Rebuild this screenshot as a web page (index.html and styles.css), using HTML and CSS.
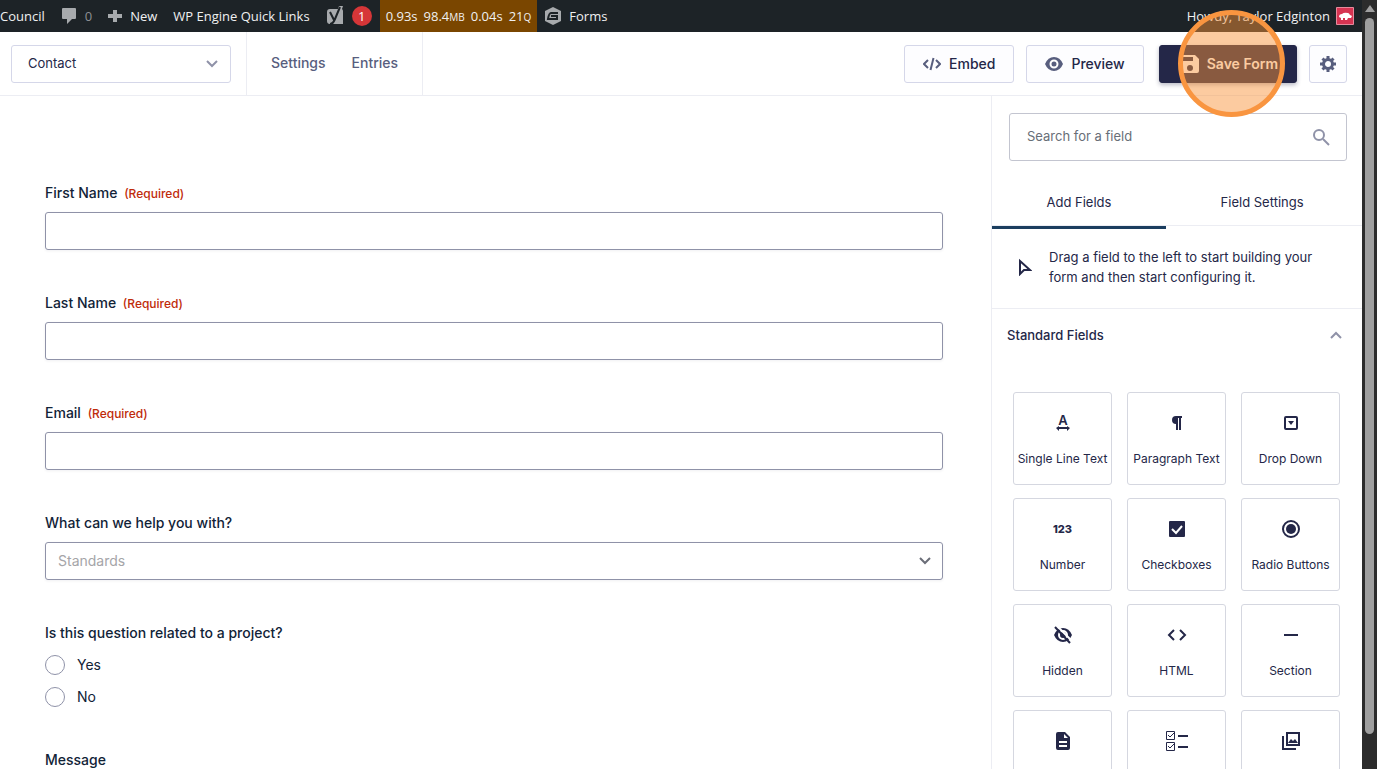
FILE: index.html
```
<!DOCTYPE html>
<html lang="en">
<head>
    <meta charset="UTF-8">
    <meta name="viewport" content="width=device-width, initial-scale=1.0">
    <title>Contact - Forms</title>
    <link rel="stylesheet" href="styles.css">
</head>
<body>
    <div class="window">
        <div class="page">
            <nav class="adminbar">
                <a href="#">Council</a>
                <a href="#" class="comments">
                    <svg width="16" height="18" viewBox="0 0 16 18"><path fill="#a7aaad" d="M2 1h12q1 0 1 1v9q0 1-1 1h-3l-5 5v-5H2q-1 0-1-1V2q0-1 1-1z"/></svg>
                    <span>0</span>
                </a>
                <a href="#">
                    <svg width="14" height="14" viewBox="0 0 14 14"><path fill="#a7aaad" d="M5 1h4v4h5v4H9v4H5V9H0V5h5z"/></svg>
                    <span>New</span>
                </a>
                <a href="#">WP Engine Quick Links</a>
                <a href="#" class="yoast" aria-label="SEO">
                    <svg width="18" height="20" viewBox="0 0 18 20">
                        <path fill="#a7aaad" d="M4 3h8l1-3h4l-1 3q1 1 1 2v13H4q-3 0-3-3V6q0-3 3-3z"/>
                        <path fill="none" stroke="#1d2327" stroke-width="2" d="M4 6l4 8M14 1L9 13q-2 5-5 5"/>
                    </svg>
                    <span class="badge">1</span>
                </a>
                <a href="#" class="stats">
                    <span>0.93s</span>
                    <span>98.4<small>MB</small></span>
                    <span>0.04s</span>
                    <span>21<small>Q</small></span>
                </a>
                <a href="#">
                    <svg width="16" height="18" viewBox="0 0 16 18">
                        <path fill="#a7aaad" d="M8 0l8 4v10l-8 4-8-4V4z"/>
                        <path fill="none" stroke="#1d2327" stroke-width="2" d="M13 6H6q-2 0-3 6h9V9H6"/>
                    </svg>
                    <span>Forms</span>
                </a>
                <a href="#" class="account">
                    <span>Howdy, Taylor Edginton</span>
                    <svg width="18" height="18" viewBox="0 0 18 18">
                        <path fill="#d63452" stroke="#e58a9c" d="M.5.5h17v17H.5z"/>
                        <path fill="#fff" d="M3 10q0-3 3-3 2-2 6-1 1 0 2 2l2 1-1 2h-3l-1 2h-2v-2H7v2H5v-2z"/>
                    </svg>
                </a>
            </nav>

            <header class="toolbar">
                <div class="switcher">
                    <select class="form-select" aria-label="Form">
                        <option>Contact</option>
                    </select>
                    <svg class="chevron" width="12" height="8" viewBox="0 0 12 8"><path fill="none" stroke="#8f92a8" stroke-width="2" d="M1 1l5 5 5-5"/></svg>
                </div>
                <nav class="links">
                    <a href="#">Settings</a>
                    <a href="#">Entries</a>
                </nav>
                <div class="actions">
                    <button class="btn">
                        <svg width="18" height="14" viewBox="0 0 18 14"><path fill="none" stroke="#585e7e" stroke-width="2" d="M5 3L1 7l4 4M13 3l4 4-4 4M10.500 1l-3 12"/></svg>
                        Embed
                    </button>
                    <button class="btn">
                        <svg width="18" height="14" viewBox="0 0 18 14">
                            <path fill="#585e7e" d="M9 0q6 0 9 7-3 7-9 7T0 7q3-7 9-7z"/>
                            <circle cx="9" cy="7" r="3.500" fill="#585e7e" stroke="#fff" stroke-width="2"/>
                        </svg>
                        Preview
                    </button>
                    <div class="save">
                        <button class="btn primary">
                            <svg width="18" height="18" viewBox="0 0 18 18"><path fill="#fff" fill-rule="evenodd" d="M2 0h12l4 4v12q0 2-2 2H2q-2 0-2-2V2q0-2 2-2zM2 2v4h10V2zM9 10a3 3 0 1 0 0 6 3 3 0 1 0 0-6z"/></svg>
                            Save Form
                        </button>
                        <span class="click-marker"></span>
                    </div>
                    <button class="btn gear" aria-label="Form settings">
                        <svg width="16" height="16" viewBox="0 0 16 16">
                            <circle cx="8" cy="8" r="4.500" fill="none" stroke="#585e7e" stroke-width="3"/>
                            <path stroke="#585e7e" stroke-width="3" d="M8 0v3M8 13v3M0 8h3M13 8h3M2.500 2.500l2 2M11.500 11.500l2 2M2.500 13.500l2-2M11.500 4.500l2-2"/>
                        </svg>
                    </button>
                </div>
            </header>

            <div class="editor">
                <main class="canvas">
                    <div class="field">
                        <label for="first">First Name <span class="required">(Required)</span></label>
                        <input type="text" id="first">
                    </div>
                    <div class="field">
                        <label for="last">Last Name <span class="required">(Required)</span></label>
                        <input type="text" id="last">
                    </div>
                    <div class="field">
                        <label for="email">Email <span class="required">(Required)</span></label>
                        <input type="email" id="email">
                    </div>
                    <div class="field">
                        <label for="topic">What can we help you with?</label>
                        <div class="select-wrap">
                            <select id="topic">
                                <option>Standards</option>
                            </select>
                            <svg class="chevron" width="12" height="8" viewBox="0 0 12 8"><path fill="none" stroke="#6b6e78" stroke-width="2" d="M1 1l5 5 5-5"/></svg>
                        </div>
                    </div>
                    <fieldset class="field">
                        <legend>Is this question related to a project?</legend>
                        <label class="choice"><input type="radio" name="project"> Yes</label>
                        <label class="choice"><input type="radio" name="project"> No</label>
                    </fieldset>
                    <div class="field">
                        <label for="message">Message</label>
                        <textarea id="message"></textarea>
                    </div>
                </main>

                <aside class="sidebar">
                    <div class="search">
                        <input type="search" placeholder="Search for a field" aria-label="Search for a field">
                        <svg class="search-icon" width="18" height="18" viewBox="0 0 18 18"><g fill="none" stroke="#8f92a8" stroke-width="2"><circle cx="7" cy="7" r="5"/><path d="M11 11l6 6"/></g></svg>
                    </div>
                    <div class="tabs">
                        <button class="tab active">Add Fields</button>
                        <button class="tab">Field Settings</button>
                    </div>
                    <div class="hint">
                        <svg width="14" height="18" viewBox="0 0 14 18"><path fill="none" stroke="#242748" stroke-width="2" d="M2 3v13l4-4h6z"/></svg>
                        <p>Drag a field to the left to start building your form and then start configuring it.</p>
                    </div>
                    <button class="group-title">
                        Standard Fields
                        <svg width="12" height="8" viewBox="0 0 12 8"><path fill="none" stroke="#8f92a8" stroke-width="2" d="M1 7l5-5 5 5"/></svg>
                    </button>
                    <div class="fields">
                        <button class="card">
                            <svg width="20" height="20" viewBox="0 0 20 20">
                                <text x="10" y="12" text-anchor="middle" class="icon-letter">A</text>
                                <path d="M3 15l3-2v1h8v-1l3 2-3 3v-2H6v2z"/>
                            </svg>
                            Single Line Text
                        </button>
                        <button class="card">
                            <svg width="20" height="20" viewBox="0 0 20 20"><path d="M9 3h6v2h-1v12h-2V5h-1v12H9v-6q-4 0-4-4t4-4z"/></svg>
                            Paragraph Text
                        </button>
                        <button class="card">
                            <svg width="20" height="20" viewBox="0 0 20 20"><rect class="line" x="4" y="4" width="12" height="12" rx="1"/><path d="M7 8h6l-3 4z"/></svg>
                            Drop Down
                        </button>
                        <button class="card">
                            <span class="digits">123</span>
                            Number
                        </button>
                        <button class="card">
                            <svg width="20" height="20" viewBox="0 0 20 20"><rect x="2" y="2" width="16" height="16" rx="1"/><path class="tick" d="M5 10l4 4 6-7"/></svg>
                            Checkboxes
                        </button>
                        <button class="card">
                            <svg width="20" height="20" viewBox="0 0 20 20"><circle class="line" cx="10" cy="10" r="8"/><circle cx="10" cy="10" r="5"/></svg>
                            Radio Buttons
                        </button>
                        <button class="card">
                            <svg width="20" height="20" viewBox="0 0 20 20">
                                <path d="M10 3q6 0 9 7-3 7-9 7T1 10q3-7 9-7z"/>
                                <circle class="tick" cx="10" cy="10" r="4"/>
                                <path class="cut" d="M4 1l15 15"/>
                                <path class="line" d="M2 2l15 16"/>
                            </svg>
                            Hidden
                        </button>
                        <button class="card">
                            <svg width="20" height="20" viewBox="0 0 20 20"><path class="line" d="M7 5l-5 5 5 5M13 5l5 5-5 5"/></svg>
                            HTML
                        </button>
                        <button class="card">
                            <svg width="20" height="20" viewBox="0 0 20 20"><path class="line" d="M3 10h14"/></svg>
                            Section
                        </button>
                        <button class="card">
                            <svg width="20" height="20" viewBox="0 0 20 20"><path fill-rule="evenodd" d="M5 1h7l5 5v11q0 2-2 2H5q-2 0-2-2V3q0-2 2-2zM11 3v4h4zM6 10v2h8v-2zM6 14v2h8v-2z"/></svg>
                            Page
                        </button>
                        <button class="card">
                            <svg width="22" height="20" viewBox="0 0 22 20">
                                <path class="thin" d="M.5.500h8v8h-8zM.5 11.500h8v8h-8zM2 4l2 2 4-4M2 15l2 2 4-4"/>
                                <path class="line" d="M12 5h10M12 16h10"/>
                            </svg>
                            Multiple Choice
                        </button>
                        <button class="card">
                            <svg width="20" height="20" viewBox="0 0 20 20"><path class="line" d="M6 2h12v12H6zM2 5v13h13"/><path d="M7 12l3-4 2 2 2-2 3 4z"/></svg>
                            Image Choice
                        </button>
                    </div>
                </aside>
            </div>
        </div>

        <div class="scrollbar">
            <span class="arrow"></span>
            <span class="thumb"></span>
        </div>
    </div>
</body>
</html>
```
FILE: styles.css
```
* {
    box-sizing: border-box;
}

body {
    margin: 0;
    font-family: Inter, sans-serif;
    font-size: 14px;
    line-height: 20px;
    color: #242748;
    background-color: #fff;
}

button, input, select, textarea {
    font: inherit;
    color: inherit;
}

a {
    color: inherit;
    text-decoration: none;
}

svg {
    flex: none;
}

.window {
    display: flex;
    height: 100vh;
    overflow: hidden;
}

.page {
    flex: 1;
    min-width: 0;
    display: flex;
    flex-direction: column;
}

/* admin bar */
.adminbar {
    flex: none;
    display: flex;
    height: 32px;
    background-color: #1d2327;
    color: #f0f0f1;
    font-family: "Open Sans", sans-serif;
    font-size: 13px;
    white-space: nowrap;
}

.adminbar a {
    display: flex;
    align-items: center;
    gap: 8px;
    padding: 0 8px;
}

.adminbar a:first-child {
    padding-left: 0;
}

.adminbar .comments {
    color: #8c8f94;
}

.badge {
    width: 20px;
    border-radius: 10px;
    background-color: #d63638;
    color: #fff;
    text-align: center;
}

.adminbar .stats {
    gap: 6px;
    padding: 0 6px;
    background-color: #7a4600;
}

.stats small {
    font-size: 10px;
}

.adminbar .account {
    gap: 6px;
    margin-left: auto;
}

/* toolbar */
.toolbar {
    flex: none;
    display: flex;
    height: 64px;
    border-bottom: 1px solid #ecedf3;
}

.switcher {
    position: relative;
    padding: 13px 15px 0 11px;
}

.form-select {
    appearance: none;
    width: 220px;
    height: 38px;
    padding: 0 16px 2px;
    border: 1px solid #d5d7e9;
    border-radius: 3px;
    background-color: #fff;
    font-size: 13px;
}

.switcher .chevron {
    position: absolute;
    right: 28px;
    top: 28px;
}

.links {
    display: flex;
    align-items: center;
    gap: 26px;
    padding: 0 24px 2px;
    border: solid #ecedf3;
    border-width: 0 1px;
    color: #585e7e;
    font-weight: 500;
}

.actions {
    display: flex;
    gap: 12px;
    margin-left: auto;
    padding: 13px 15px 0 0;
}

.btn {
    display: flex;
    align-items: center;
    justify-content: center;
    gap: 8px;
    height: 38px;
    padding: 0 18px;
    border: 1px solid #d5d7e9;
    border-radius: 3px;
    background-color: #fdfdff;
    font-weight: 500;
}

.save {
    position: relative;
    margin-left: 3px;
}

.primary {
    padding: 0 18px 0 21px;
    border-color: #242748;
    background-color: #242748;
    box-shadow: 0 2px 4px #24274850;
    color: #fff;
    font-weight: 600;
}

.click-marker {
    position: absolute;
    z-index: 1;
    left: 19px;
    top: -35px;
    width: 107px;
    height: 107px;
    border: 5px solid #f99540;
    border-radius: 50%;
    background-color: rgba(249, 147, 57, 0.48);
    pointer-events: none;
}

.gear {
    width: 38px;
    padding: 0;
}

/* form */
.editor {
    flex: 1;
    min-height: 0;
    display: flex;
}

.canvas {
    flex: 1;
    overflow: hidden;
    padding: 87px 48px 0 45px;
    color: #112337;
}

.field {
    margin: 0 0 43px;
    padding: 0;
    border: 0;
    font-weight: 500;
}

.field label {
    display: block;
    margin-bottom: 9px;
}

.required {
    margin-left: 3px;
    color: #c02b0a;
    font-size: 12px;
    line-height: 1;
}

.field input[type="text"],
.field input[type="email"],
.field select,
.field textarea {
    display: block;
    width: 100%;
    height: 38px;
    padding: 0 12px;
    border: 1px solid #8f92a8;
    border-radius: 3px;
    background-color: #fff;
    box-shadow: 0 1px 3px #24274812;
}

.field select {
    appearance: none;
    color: #a5a5a8;
    font-weight: 400;
}

.field textarea {
    height: 120px;
}

.select-wrap {
    position: relative;
}

.select-wrap .chevron {
    position: absolute;
    right: 12px;
    top: 15px;
}

.field legend {
    margin-bottom: 12px;
    padding: 0;
}

.field .choice {
    display: flex;
    align-items: center;
    gap: 12px;
    margin-bottom: 12px;
    font-weight: 400;
}

.field .choice:last-child {
    margin-bottom: 0;
}

.choice input {
    appearance: none;
    width: 20px;
    height: 20px;
    margin: 0;
    border: 1px solid #8f92a8;
    border-radius: 50%;
}

/* sidebar */
.sidebar {
    flex: none;
    width: 371px;
    overflow: hidden;
    border-left: 1px solid #ecedf3;
    font-size: 13px;
}

.search {
    position: relative;
    padding: 17px 15px 19px 17px;
}

.search input {
    appearance: none;
    display: block;
    width: 100%;
    height: 48px;
    padding: 0 50px 2px 17px;
    border: 1px solid #c3c5d0;
    border-radius: 3px;
}

.search input::placeholder {
    color: #686e77;
}

.search-icon {
    position: absolute;
    right: 32px;
    top: 32px;
}

.tabs {
    display: grid;
    grid-template-columns: 47% 52%;
    height: 46px;
    border-bottom: 1px solid #ecedf3;
}

.tab {
    position: relative;
    padding: 0 0 2px;
    border: 0;
    background: none;
}

.tab.active::after {
    content: "";
    position: absolute;
    left: 0;
    right: 0;
    bottom: -4px;
    height: 3px;
    background-color: #1b3e5f;
}

.hint {
    display: flex;
    align-items: center;
    gap: 17px;
    padding: 21px 40px 21px 26px;
    border-bottom: 1px solid #ecedf3;
}

.hint p {
    margin: 0;
}

.group-title {
    display: flex;
    align-items: center;
    justify-content: space-between;
    width: 100%;
    height: 53px;
    padding: 0 20px 2px 15px;
    border: 0;
    background: none;
    font-weight: 500;
}

.fields {
    display: grid;
    grid-template-columns: repeat(3, 1fr);
    gap: 13px 15px;
    padding: 30px 22px 30px 21px;
}

.card {
    display: flex;
    flex-direction: column;
    align-items: center;
    gap: 16px;
    height: 93px;
    padding: 20px 0 0;
    border: 1px solid #d5d7e0;
    border-radius: 3px;
    background-color: #fff;
    font-size: 12px;
    white-space: nowrap;
}

.card svg {
    fill: #242748;
}

.card .line {
    fill: none;
    stroke: #242748;
    stroke-width: 2;
}

.card .thin {
    fill: none;
    stroke: #242748;
}

.card .tick,
.card .cut {
    fill: none;
    stroke: #fff;
    stroke-width: 2;
}

.icon-letter {
    font-size: 13px;
    font-weight: 600;
}

.digits {
    font-size: 11px;
    font-weight: 800;
}

/* window scrollbar */
.scrollbar {
    flex: none;
    display: flex;
    flex-direction: column;
    align-items: center;
    width: 15px;
    padding: 5px 0 35px;
    background-color: #2c2c2c;
}

.arrow {
    border: solid transparent;
    border-width: 0 5px 7px;
    border-bottom-color: #9f9f9f;
}

.thumb {
    flex: 1;
    width: 9px;
    margin-top: 6px;
    border-radius: 5px;
    background-color: #9f9f9f;
}
```
